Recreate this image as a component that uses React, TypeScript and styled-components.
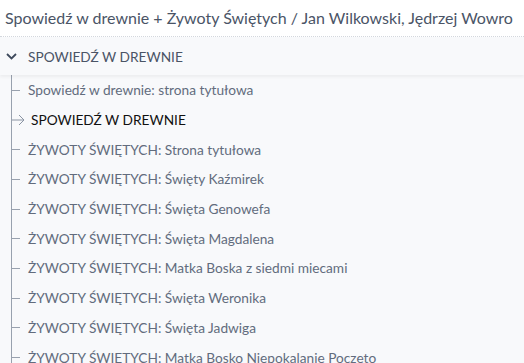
import React from 'react'
import styled, { createGlobalStyle } from 'styled-components'

const GlobalStyle = createGlobalStyle`
  body {
    margin: 0;
    background: #ffffff;
    font-family: Lato, 'Open Sans', sans-serif;
  }
`

type ItemProps = {
  active?: boolean
}

const Wrapper = styled.div`
  width: 524px;
  height: 363px;
  overflow: hidden;
  background: #f8f9fb;
`
const Title = styled.h1`
  margin: 0;
  height: 37px;
  box-sizing: border-box;
  padding: 7px 0 0 5px;
  background: #ffffff;
  border-bottom: 1px dotted #d3d7dd;
  font-size: 16px;
  font-weight: 400;
  line-height: 22px;
  color: #4a5466;
  white-space: nowrap;
`
const SectionHeader = styled.div`
  display: flex;
  align-items: center;
  gap: 11px;
  height: 38px;
  padding-left: 6px;
  background: #f8f9fb;
  box-shadow: 0 2px 3px rgba(0, 0, 0, 0.05);
  position: relative;
  z-index: 1;
`
const SectionTitle = styled.span`
  font-size: 13.7px;
  color: #4a5466;
  text-transform: uppercase;
`
const Tree = styled.ul`
  list-style: none;
  margin: 0 0 0 11px;
  padding: 0;
  border-left: 1px solid #98a1ae;
`
const Item = styled.li<ItemProps>`
  display: flex;
  align-items: center;
  height: 29.7px;
  padding-left: ${(props) => (props.active ? '19px' : '16px')};
  position: relative;
  font-size: 13.7px;
  color: ${(props) => (props.active ? '#111111' : '#626c7d')};
  text-transform: ${(props) => (props.active ? 'uppercase' : 'none')};
  white-space: nowrap;
  &::before {
    content: '';
    display: ${(props) => (props.active ? 'none' : 'block')};
    position: absolute;
    left: 0;
    top: 50%;
    width: 8px;
    border-top: 1px solid #98a1ae;
  }
`
const Arrow = styled.svg`
  position: absolute;
  left: 0;
  top: 50%;
  margin-top: -6px;
`

const items = [
  'Spowiedź w drewnie: strona tytułowa',
  'Spowiedź w drewnie',
  'ŻYWOTY ŚWIĘTYCH: Strona tytułowa',
  'ŻYWOTY ŚWIĘTYCH: Święty Kaźmirek',
  'ŻYWOTY ŚWIĘTYCH: Święta Genowefa',
  'ŻYWOTY ŚWIĘTYCH: Święta Magdalena',
  'ŻYWOTY ŚWIĘTYCH: Matka Boska z siedmi miecami',
  'ŻYWOTY ŚWIĘTYCH: Święta Weronika',
  'ŻYWOTY ŚWIĘTYCH: Święta Jadwiga',
  'ŻYWOTY ŚWIĘTYCH: Matka Bosko Niepokalanie Poczeto',
]

function App() {
  return (
    <>
      <GlobalStyle />
      <Wrapper>
        <Title>Spowiedź w drewnie + Żywoty Świętych / Jan Wilkowski, Jędrzej Wowro</Title>
        <SectionHeader>
          <svg width="11" height="7" viewBox="0 0 11 7">
            <path d="M1 1l4.5 4.5L10 1" fill="none" stroke="#3e4a5c" strokeWidth="1.8" />
          </svg>
          <SectionTitle>Spowiedź w drewnie</SectionTitle>
        </SectionHeader>
        <Tree>
          {items.map((text, i) => (
            <Item key={i} active={i === 1}>
              {i === 1 && (
                <Arrow width="13" height="12" viewBox="0 0 13 12">
                  <path d="M0 6h12M7 1l5 5-5 5" fill="none" stroke="#8a94a3" strokeWidth="1" />
                </Arrow>
              )}
              {text}
            </Item>
          ))}
        </Tree>
      </Wrapper>
    </>
  )
}

export default App
